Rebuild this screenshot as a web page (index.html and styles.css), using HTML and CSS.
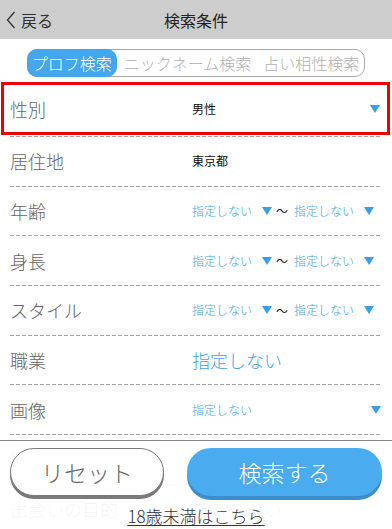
FILE: index.html
```html
<!DOCTYPE html>
<html lang="ja">
<head>
<meta charset="utf-8">
<title>検索条件</title>
<link rel="stylesheet" href="styles.css">
</head>
<body>
<div class="page">
  <header class="topbar">
    <a class="back" href="#">
      <svg class="chev" width="10" height="18" viewBox="0 0 10 18"><polyline points="8.5,1 1.5,9 8.5,17" fill="none" stroke="#333" stroke-width="1.3"/></svg>
      <span>戻る</span>
    </a>
    <h1 class="title">検索条件</h1>
    <span></span>
  </header>

  <nav class="tabs">
    <div class="seg">
      <span class="seg-item on">プロフ検索</span>
      <span class="seg-item">ニックネーム検索</span>
      <span class="seg-item">占い相性検索</span>
    </div>
  </nav>

  <ul class="conds">
    <li class="row hl">
      <span class="label">性別</span>
      <span class="val">男性</span>
      <span class="caret"></span>
    </li>
    <li class="row first">
      <span class="label">居住地</span>
      <span class="val">東京都</span>
      <span></span>
    </li>
    <li class="row">
      <span class="label">年齢</span>
      <span class="range"><span class="sm">指定しない</span><span class="caret"></span><span class="tilde">〜</span><span class="sm">指定しない</span><span class="caret"></span></span>
      <span></span>
    </li>
    <li class="row">
      <span class="label">身長</span>
      <span class="range"><span class="sm">指定しない</span><span class="caret"></span><span class="tilde">〜</span><span class="sm">指定しない</span><span class="caret"></span></span>
      <span></span>
    </li>
    <li class="row">
      <span class="label">スタイル</span>
      <span class="range"><span class="sm">指定しない</span><span class="caret"></span><span class="tilde">〜</span><span class="sm">指定しない</span><span class="caret"></span></span>
      <span></span>
    </li>
    <li class="row">
      <span class="label">職業</span>
      <span class="big">指定しない</span>
      <span></span>
    </li>
    <li class="row">
      <span class="label">画像</span>
      <span class="sm">指定しない</span>
      <span class="caret"></span>
    </li>
    <li class="row">
      <span class="label">興味あること</span>
      <span class="big">指定しない</span>
      <span></span>
    </li>
    <li class="row">
      <span class="label">出会いの目的</span>
      <span class="big">指定しない</span>
      <span></span>
    </li>
  </ul>

  <footer class="actions">
    <div class="btns">
      <button class="btn reset">リセット</button>
      <button class="btn search">検索する</button>
    </div>
    <a class="under" href="#">18歳未満はこちら</a>
  </footer>
</div>
</body>
</html>
```

FILE: styles.css
```css
* { box-sizing: border-box; }
html, body { margin: 0; padding: 0; }
body {
  font-family: "Noto Sans CJK JP", "Noto Sans", sans-serif;
  background: #fff;
  color: #333;
}
.page {
  position: relative;
  height: 100vh;
  overflow: hidden;
}

/* header */
.topbar {
  height: 39px;
  background: #cdcdcd;
  display: grid;
  grid-template-columns: 1fr auto 1fr;
  align-items: center;
}
.back {
  display: flex;
  align-items: center;
  gap: 5px;
  padding-left: 6px;
  color: #333;
  text-decoration: none;
  font-size: 16px;
  line-height: 20px;
}
.chev { display: block; }
.title {
  margin: 0;
  font-size: 16px;
  font-weight: 400;
  color: #222;
  line-height: 20px;
}

/* tabs */
.tabs {
  display: flex;
  justify-content: center;
  padding-top: 10px;
}
.seg {
  display: flex;
  border: 1px solid #a8a8a8;
  border-radius: 10px;
  height: 28px;
}
.seg-item {
  font-size: 16px;
  font-weight: 300;
  line-height: 26px;
  padding: 0 5px;
  color: #b0b0b0;
  white-space: nowrap;
}
.seg-item + .seg-item { margin-left: 2px; }
.seg-item.on {
  background: #44a7ec;
  color: #fff;
  border-radius: 10px;
  margin: -1px 0 -1px -1px;
  line-height: 28px;
  padding: 0 5px;
}

/* condition list */
.conds {
  list-style: none;
  margin: 0;
  padding: 0;
}
.row {
  display: grid;
  grid-template-columns: 182px 1fr auto;
  align-items: center;
  height: 49.67px;
  margin: 0 10px;
  padding-top: 1px;
  background: repeating-linear-gradient(90deg, #a3a3a3 0 4px, transparent 4px 6px) top left / 100% 1px no-repeat;
}
.row.hl {
  height: 53px;
  margin: 5px 2px 0 1px;
  padding: 0 6px;
  border: 3px solid #ee0000;
  background: none;
}
.row.first { margin-top: 1px; }
.label {
  font-size: 18px;
  font-weight: 300;
  color: #666;
  line-height: 24px;
  white-space: nowrap;
}
.val {
  font-size: 12px;
  color: #111;
  line-height: 16px;
}
.sm {
  font-size: 12px;
  font-weight: 300;
  color: #42a2e2;
  line-height: 16px;
  white-space: nowrap;
}
.big {
  font-size: 18px;
  font-weight: 300;
  color: #42a2e2;
  line-height: 24px;
}
.range {
  display: flex;
  align-items: center;
}
.range .caret { margin: 0 4px 0 10px; }
.tilde {
  font-size: 12px;
  color: #222;
  margin-right: 6px;
}
.caret {
  width: 0;
  height: 0;
  border-left: 5px solid transparent;
  border-right: 5px solid transparent;
  border-top: 8px solid #3b9de3;
  margin-right: 1px;
}

/* bottom overlay */
.actions {
  position: absolute;
  left: 0;
  right: 0;
  bottom: 0;
  height: 89px;
  background: rgba(255, 255, 255, 0.93);
  border-top: 1px solid #858585;
  display: flex;
  flex-direction: column;
  align-items: center;
}
.btns {
  display: flex;
  justify-content: space-between;
  width: 100%;
  padding: 7px 10px 0 10px;
}
.btn {
  font-family: inherit;
  font-size: 23px;
  font-weight: 300;
  height: 48px;
  border-radius: 25px;
  padding: 0;
  line-height: 44px;
}
.reset {
  width: 154px;
  background: #fff;
  border: 1px solid #7a7a7a;
  color: #666;
  box-shadow: 0 3px 0 #7a7a7a;
}
.search {
  width: 195px;
  background: #4aabef;
  border: none;
  color: #fff;
  box-shadow: 0 4px 0 #3a8ed0;
}
.under {
  margin-top: 10px;
  font-size: 17px;
  font-weight: 300;
  line-height: 20px;
  color: #333;
  text-decoration: underline;
  text-underline-offset: 2px;
}
```
